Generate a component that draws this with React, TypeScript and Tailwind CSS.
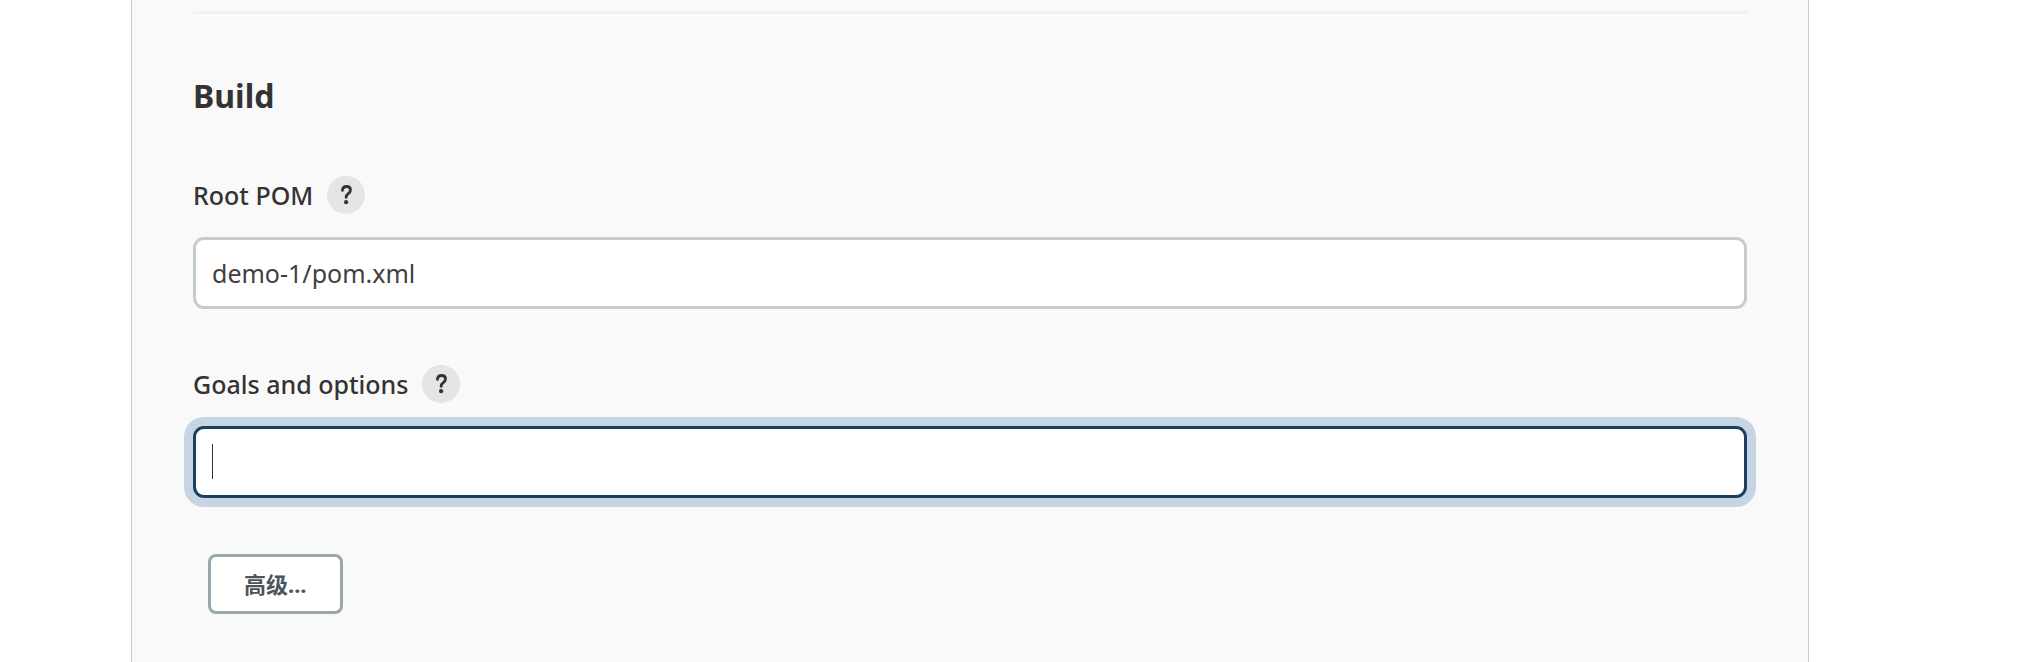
import { useState } from "react";

function HelpButton({ label }: { label: string }) {
  return (
    <button
      type="button"
      aria-label={`Help for ${label}`}
      className="flex size-[38px] shrink-0 items-center justify-center rounded-full bg-[#e5e5e5] text-[#333]"
    >
      <svg viewBox="0 0 38 38" className="size-[38px]" fill="none" aria-hidden="true">
        <path
          d="M15.400 14.400C15.600 11.900 17.200 10.500 19.600 10.500C21.900 10.500 23.500 12 23.500 14.100C23.500 15.700 22.700 16.700 21.300 17.700C19.700 18.800 19.100 19.600 19.100 21.400"
          stroke="currentColor"
          strokeWidth="2.800"
          strokeLinecap="round"
          strokeLinejoin="round"
        />
        <circle cx="19.100" cy="26.200" r="2.100" fill="currentColor" />
      </svg>
    </button>
  );
}

type FieldProps = {
  id: string;
  label: string;
  initial: string;
  active?: boolean;
};

function Field({ id, label, initial, active = false }: FieldProps) {
  const [value, setValue] = useState(initial);
  return (
    <div>
      <div className="flex items-center gap-[14px]">
        <label htmlFor={id} className="text-[25px] leading-[38px] font-medium">
          {label}
        </label>
        <HelpButton label={label} />
      </div>
      <div className="relative mt-[23px]">
        <input
          id={id}
          type="text"
          value={value}
          onChange={(e) => setValue(e.target.value)}
          className={
            active
              ? "block h-[72px] w-full rounded-[11px] border-3 border-[#1a3f60] bg-white px-4 text-[25px] text-[#404040] ring-9 ring-[#c7d5e2] outline-none"
              : "block h-[72px] w-full rounded-[11px] border-3 border-[#c3cccf] bg-white px-4 text-[25px] text-[#404040] outline-none"
          }
        />
        {active && value === "" && (
          <span aria-hidden="true" className="absolute top-[18px] left-[19px] h-[35px] w-px bg-[#333]" />
        )}
      </div>
    </div>
  );
}

export default function App() {
  return (
    <div className="min-h-screen bg-white pr-[225px] pl-[131px] font-['Noto_Sans','Noto_Sans_CJK_SC',sans-serif] text-[#333]">
      <main className="min-h-screen border-x border-[#c3cccf] bg-[#f9f9f9] px-[61px] pt-[11px] pb-10">
        <hr className="border-t-3 border-[#f1f1f1]" />
        <h2 className="mt-[58px] text-[32px] leading-[48px] font-bold">Build</h2>
        <form className="mt-14 flex flex-col gap-14" onSubmit={(e) => e.preventDefault()}>
          <Field id="root-pom" label="Root POM" initial="demo-1/pom.xml" />
          <Field id="goals" label="Goals and options" initial="" active />
          <button
            type="button"
            className="ml-[15px] h-[60px] self-start rounded-lg border-3 border-[#9aa6ad] bg-white px-[33px] text-[22px] font-bold text-[#4d545d]"
          >
            高级...
          </button>
        </form>
      </main>
    </div>
  );
}
